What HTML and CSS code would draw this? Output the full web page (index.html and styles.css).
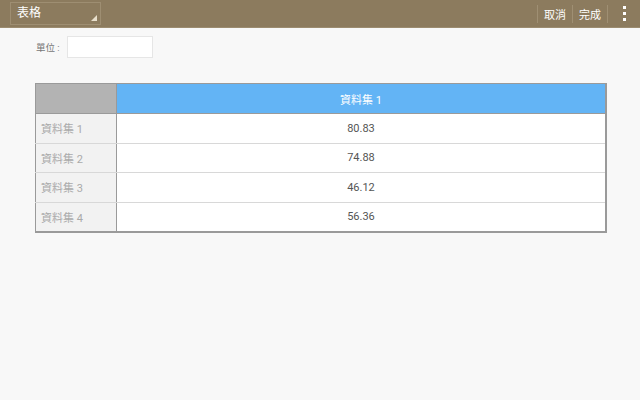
FILE: index.html
```html
<!DOCTYPE html>
<html lang="zh-TW">
<head>
    <meta charset="UTF-8">
    <meta name="viewport" content="width=device-width, initial-scale=1.0">
    <title>表格</title>
    <link rel="stylesheet" href="styles.css">
</head>
<body>
    <div class="action-bar">
        <div class="spinner">
            <span>表格</span>
            <span class="corner"></span>
        </div>
        <div class="actions">
            <span class="sep"></span>
            <a class="action">取消</a>
            <span class="sep"></span>
            <a class="action">完成</a>
            <span class="sep"></span>
            <div class="overflow">
                <i></i><i></i><i></i>
            </div>
        </div>
    </div>

    <div class="content">
        <div class="unit-row">
            <label>單位 :</label>
            <input type="text" class="unit-input">
        </div>

        <table class="data-table">
            <tr class="head">
                <th class="corner-cell"></th>
                <th>資料集 1</th>
            </tr>
            <tr>
                <td class="label">資料集 1</td>
                <td>80.83</td>
            </tr>
            <tr>
                <td class="label">資料集 2</td>
                <td>74.88</td>
            </tr>
            <tr>
                <td class="label">資料集 3</td>
                <td>46.12</td>
            </tr>
            <tr>
                <td class="label">資料集 4</td>
                <td>56.36</td>
            </tr>
        </table>
    </div>
</body>
</html>
```

FILE: styles.css
```css
* {
    margin: 0;
    padding: 0;
    box-sizing: border-box;
}

body {
    font-family: Roboto, "Noto Sans CJK TC", sans-serif;
    background-color: #f8f8f8;
    color: #555;
    width: 640px;
    height: 400px;
    overflow: hidden;
}

.action-bar {
    height: 28px;
    background-color: #8c7b5e;
    display: flex;
    align-items: center;
    justify-content: space-between;
    padding-left: 10px;
    border-bottom: 1px solid #9c8c70;
}

.spinner {
    position: relative;
    width: 91px;
    height: 23px;
    border: 1px solid #9e8e72;
    color: #fff;
    font-size: 12px;
    line-height: 21px;
    padding-left: 6px;
}

.spinner .corner {
    position: absolute;
    right: 3px;
    bottom: 3px;
    width: 0;
    height: 0;
    border-left: 6px solid transparent;
    border-bottom: 6px solid #e8dfcc;
}

.actions {
    display: flex;
    align-items: center;
    height: 100%;
}

.sep {
    width: 1px;
    height: 18px;
    background-color: #9f8f73;
}

.action {
    color: #fff;
    font-size: 11px;
    padding: 0 6px;
}

.overflow {
    width: 32px;
    display: flex;
    flex-direction: column;
    align-items: center;
    gap: 3px;
}

.overflow i {
    display: block;
    width: 3px;
    height: 3px;
    background-color: #fff;
}

.content {
    padding: 8px 34px 0 35px;
}

.unit-row {
    display: flex;
    align-items: center;
    height: 22px;
    margin-left: 1px;
}

.unit-row label {
    font-size: 9.5px;
    color: #777;
    width: 31px;
}

.unit-input {
    width: 86px;
    height: 22px;
    border: 1px solid #e6e6e6;
    background-color: #fff;
    outline: none;
}

.data-table {
    margin-top: 25px;
    width: 572px;
    border-collapse: collapse;
    border: 2px solid #9a9a9a;
    border-top-width: 1px;
    border-left-width: 1px;
    font-size: 11px;
}

.data-table th,
.data-table td {
    height: 29.6px;
    text-align: center;
    font-weight: normal;
    border-bottom: 1px solid #d8d8d8;
    background-color: #fff;
    color: #555;
}

.data-table .head th {
    height: 30px;
    background-color: #63b4f5;
    color: #fff;
    border-bottom: 1px solid #9a9a9a;
}

.data-table .head .corner-cell {
    background-color: #b3b3b3;
    width: 81px;
    border-right: 1px solid #9a9a9a;
}

.data-table td.label {
    background-color: #f2f2f2;
    color: #aaa;
    text-align: left;
    padding-left: 5px;
    border-right: 1px solid #9a9a9a;
}
```
